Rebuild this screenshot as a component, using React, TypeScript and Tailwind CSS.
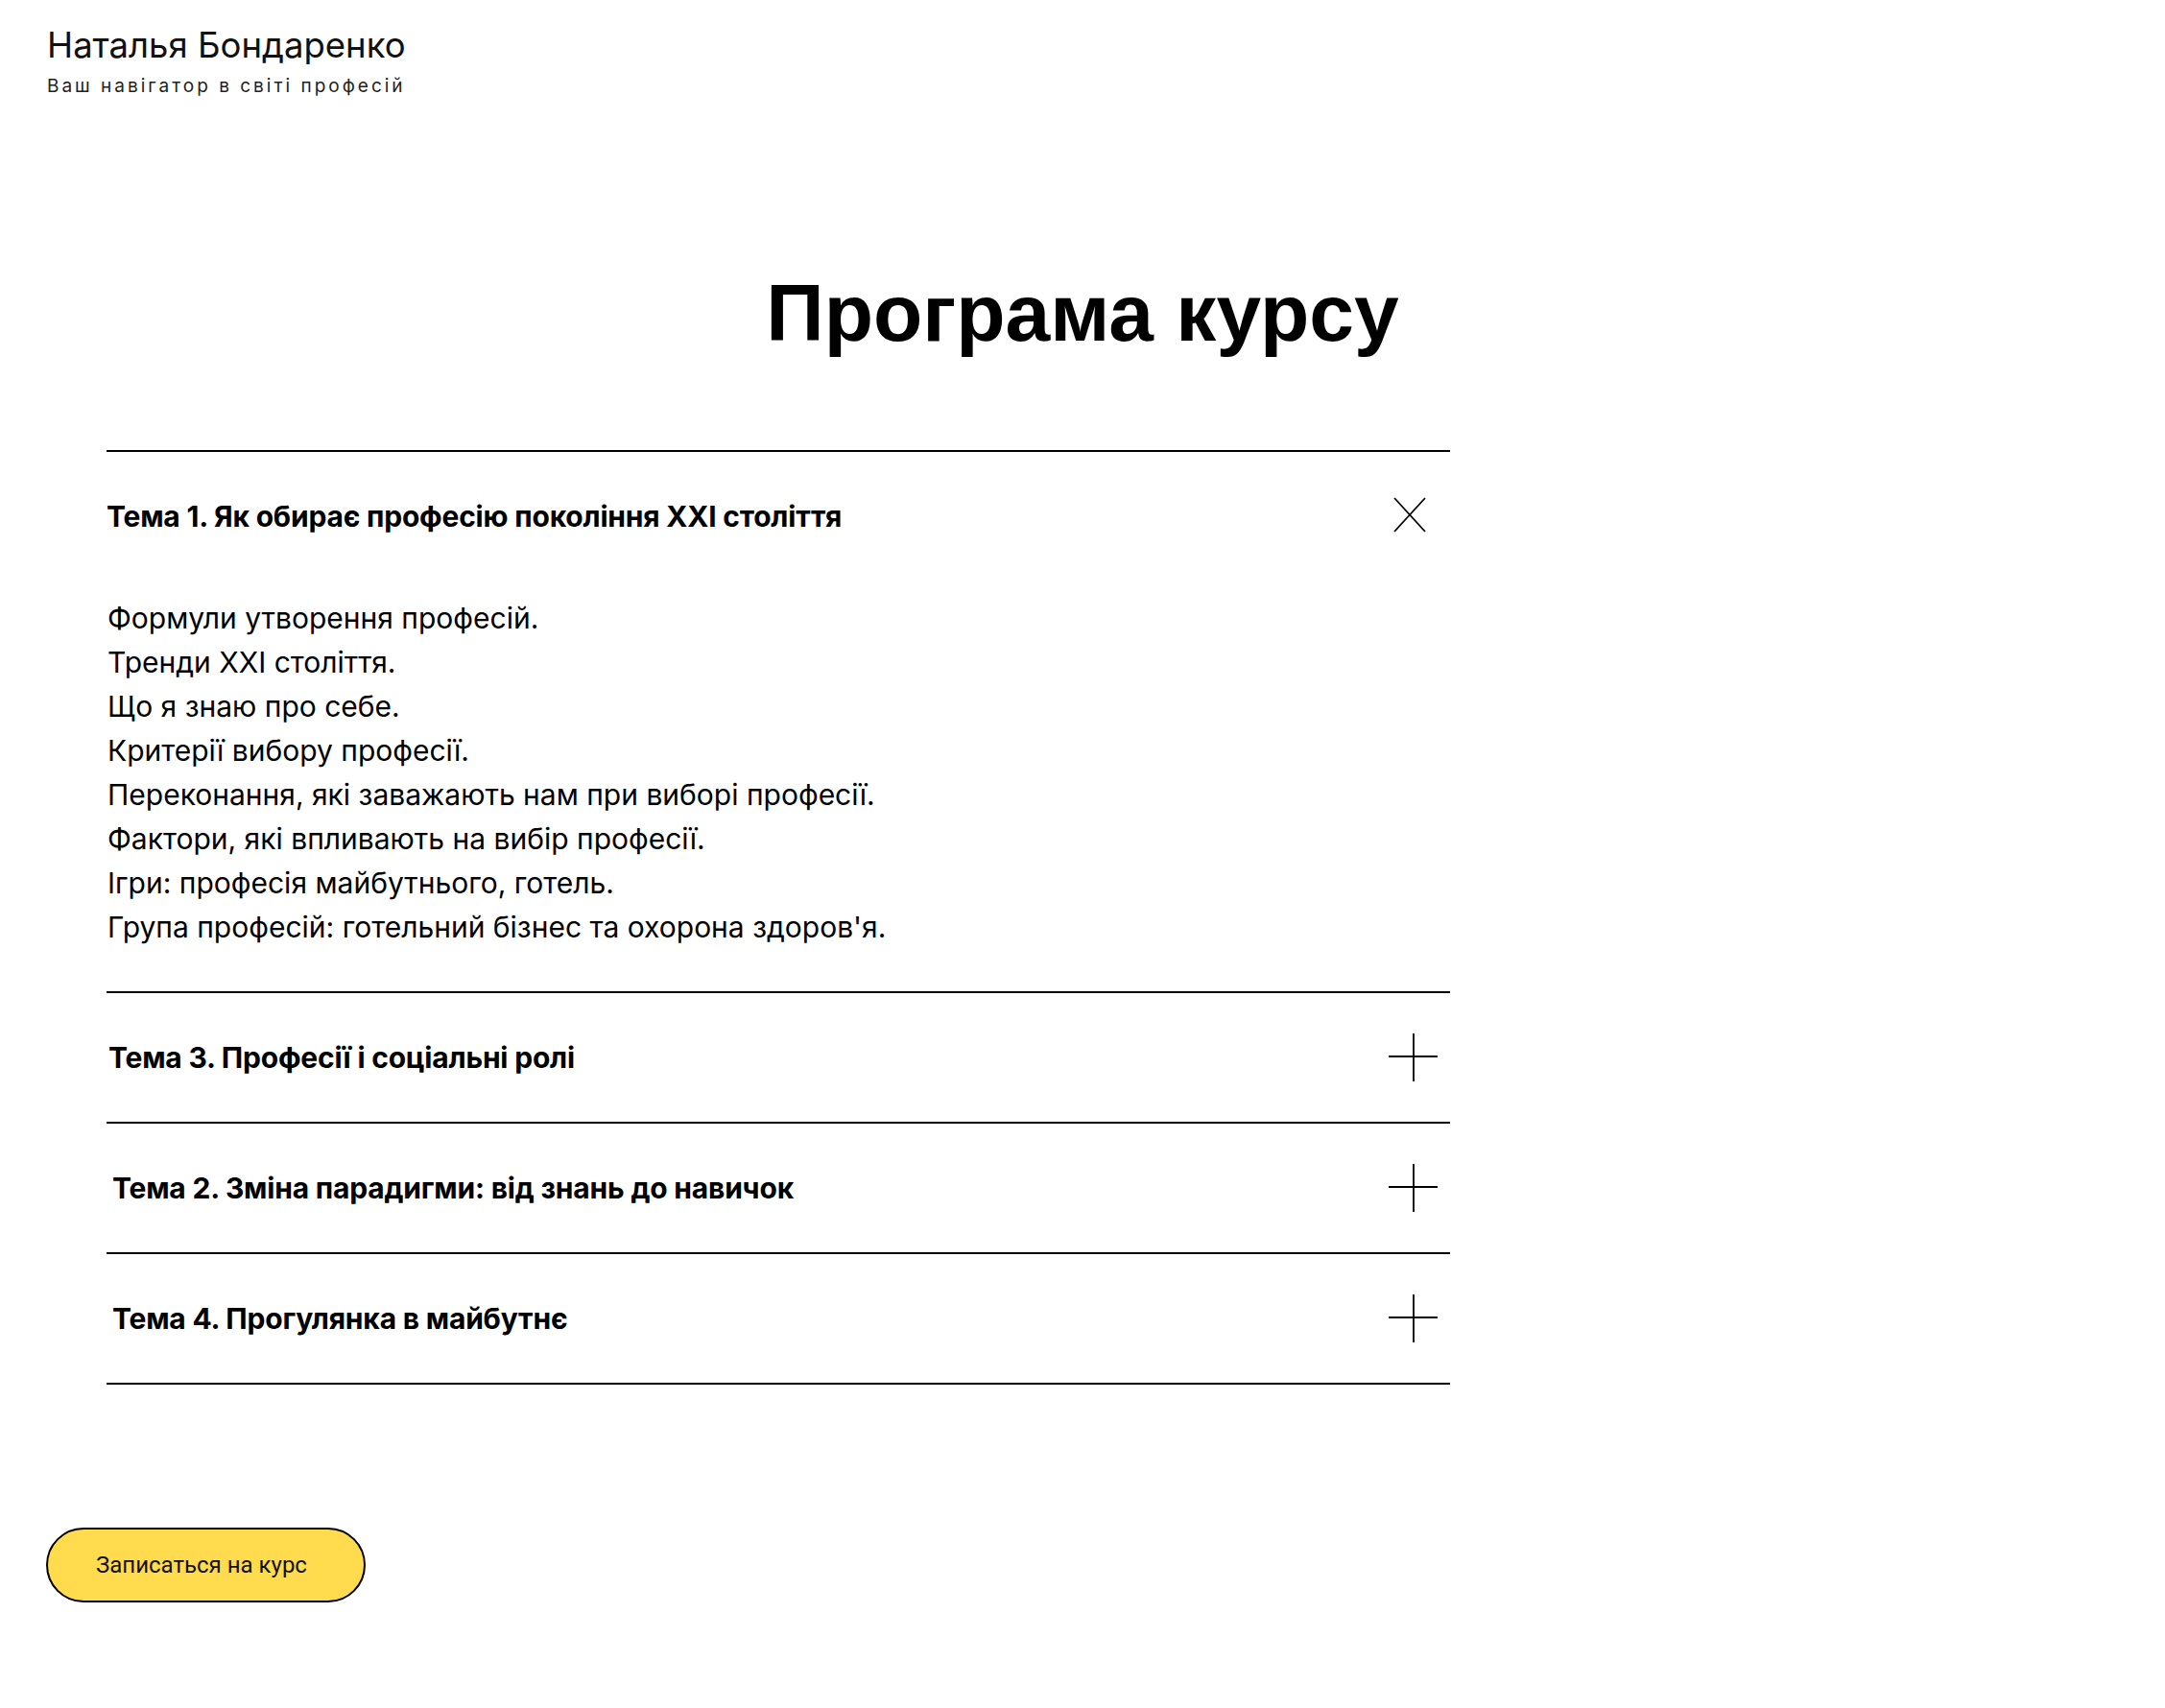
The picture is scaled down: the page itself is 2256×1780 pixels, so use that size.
import { useState } from 'react';

const topics = [
  {
    id: 1,
    title: 'Тема 1. Як обирає професію покоління XXI століття',
    indent: 'pl-0',
    items: [
      'Формули утворення професій.',
      'Тренди XXI століття.',
      'Що я знаю про себе.',
      'Критерії вибору професії.',
      'Переконання, які заважають нам при виборі професії.',
      'Фактори, які впливають на вибір професії.',
      'Ігри: професія майбутнього, готель.',
      "Група професій: готельний бізнес та охорона здоров'я.",
    ],
  },
  {
    id: 3,
    title: 'Тема 3. Професії і соціальні ролі',
    indent: 'pl-[2px]',
    items: ['Соціальні ролі людини.', 'Професії та ролі в команді.'],
  },
  {
    id: 2,
    title: 'Тема 2. Зміна парадигми: від знань до навичок',
    indent: 'pl-[6px]',
    items: ['Hard skills та soft skills.', 'Навички майбутнього.'],
  },
  {
    id: 4,
    title: 'Тема 4. Прогулянка в майбутнє',
    indent: 'pl-[6px]',
    items: ['Професії, яких ще немає.', 'Мій план розвитку.'],
  },
];

function CloseIcon() {
  return (
    <svg width="52" height="52" viewBox="0 0 52 52" fill="none" stroke="#000" strokeWidth="1.8">
      <line x1="6" y1="7" x2="38" y2="42" />
      <line x1="38" y1="7" x2="6" y2="42" />
    </svg>
  );
}

function PlusIcon() {
  return (
    <svg width="52" height="52" viewBox="0 0 52 52" fill="none" stroke="#000" strokeWidth="1.8">
      <line x1="0" y1="25" x2="51" y2="25" />
      <line x1="26" y1="1" x2="26" y2="51" />
    </svg>
  );
}

export default function App() {
  const [openId, setOpenId] = useState<number | null>(1);

  return (
    <div className="min-h-[1780px] bg-white text-black font-['Inter',sans-serif]">
      {/* header */}
      <header className="pl-[49px] pt-[25px]">
        <div className="text-[36.5px] leading-[45px] text-[#111]">Наталья Бондаренко</div>
        <div className="mt-[8px] text-[19px] leading-[23px] tracking-[3px] text-[#222]">
          Ваш навігатор в світі професій
        </div>
      </header>

      <h1 className="mt-[183px] text-center font-['Liberation_Sans',Arial,sans-serif] text-[84px] leading-none font-bold">
        Програма курсу
      </h1>

      {/* accordion */}
      <div className="mt-[101px] ml-[111px] w-[1400px] border-b-2 border-black">
        {topics.map((t) => {
          const open = openId === t.id;
          return (
            <div key={t.id} className="border-t-2 border-black">
              <button
                onClick={() => setOpenId(open ? null : t.id)}
                className="flex h-[134px] w-full items-center justify-between pr-[12px] text-left"
              >
                <span className={`${t.indent} text-[30px] font-bold tracking-[-0.2px]`}>{t.title}</span>
                {open ? <CloseIcon /> : <PlusIcon />}
              </button>
              {open && (
                <div className="pt-[16px] pb-[44px] pl-[1px] text-[30px] leading-[46px]">
                  {t.items.map((item) => (
                    <div key={item}>{item}</div>
                  ))}
                </div>
              )}
            </div>
          );
        })}
      </div>

      <div className="mt-[149px] pl-[48px]">
        <button className="flex h-[78px] w-[333px] items-center rounded-full border-2 border-black bg-[#ffdb4d] pl-[50px] font-['Roboto',sans-serif] text-[24px] text-[#111]">
          Записаться на курс
        </button>
      </div>
    </div>
  );
}
